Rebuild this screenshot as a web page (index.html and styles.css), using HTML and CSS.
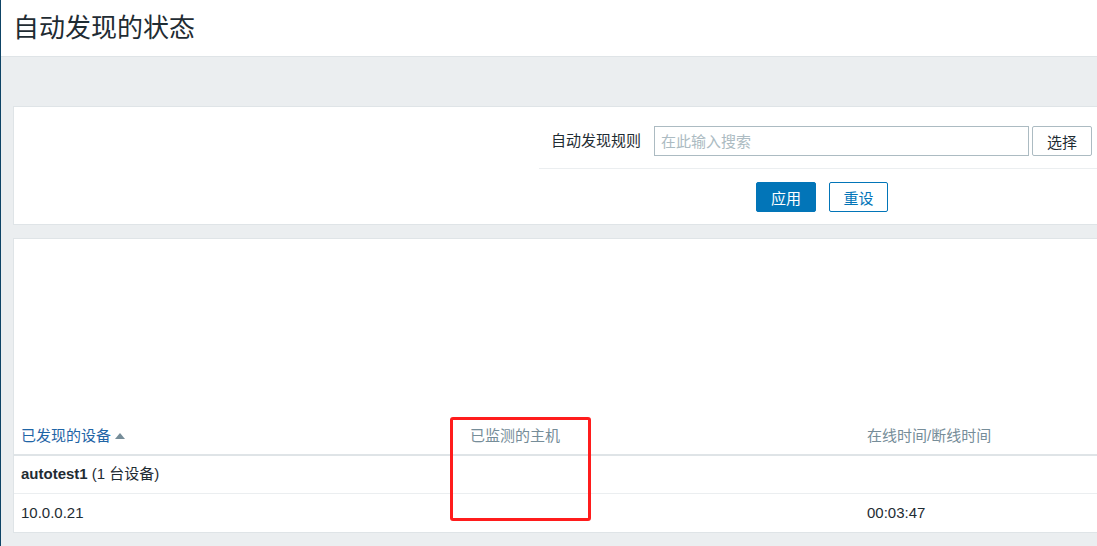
FILE: index.html
```html
<!DOCTYPE html>
<html lang="zh">
<head>
	<meta charset="UTF-8">
	<title>自动发现的状态</title>
	<link rel="stylesheet" href="styles.css">
</head>
<body>
	<div class="page">
		<div class="header">
			<h1>自动发现的状态</h1>
		</div>
		<div class="content">
			<div class="panel filter">
				<div class="filter-col">
					<div class="filter-row">
						<label class="filter-label">自动发现规则</label>
						<input type="text" class="search" placeholder="在此输入搜索">
						<button class="btn-alt">选择</button>
					</div>
					<div class="filter-buttons">
						<button class="btn-apply">应用</button>
						<button class="btn-reset">重设</button>
					</div>
				</div>
			</div>
			<div class="panel list">
				<div class="blank"></div>
				<table>
					<thead>
						<tr>
							<th class="c1"><a href="#" class="sort">已发现的设备</a><span class="arrow"></span></th>
							<th class="c2">已监测的主机</th>
							<th class="c3">在线时间/断线时间</th>
						</tr>
					</thead>
					<tbody>
						<tr>
							<td><b>autotest1</b> (1 台设备)</td>
							<td></td>
							<td></td>
						</tr>
						<tr>
							<td>10.0.0.21</td>
							<td></td>
							<td>00:03:47</td>
						</tr>
					</tbody>
				</table>
				<!-- 标注框 -->
				<div class="mark"></div>
			</div>
		</div>
	</div>
</body>
</html>
```

FILE: styles.css
```css
* {
	margin: 0;
	padding: 0;
	box-sizing: border-box;
}
html, body {
	height: 100%;
	overflow: hidden;
}
body {
	background-color: #ebeef0;
	font-family: "Liberation Sans", "Noto Sans CJK SC", sans-serif;
	font-size: 15px;
	color: #1f2c33;
}
.page {
	width: 1130px;
	min-height: 100%;
	border-left: 1px solid #0e4466;
}
.header {
	height: 57px;
	background-color: #fff;
	border-bottom: 1px solid #dfe4e7;
	padding-left: 12px;
	display: flex;
	align-items: center;
}
.header h1 {
	font-size: 26px;
	font-weight: normal;
	line-height: 30px;
	color: #1f2c33;
}
.content {
	padding: 49px 0 0 12px;
}
.panel {
	width: 1110px;
	background-color: #fff;
	border: 1px solid #dfe4e7;
}
.filter {
	padding-left: 525px;
	margin-bottom: 13px;
}
.filter-col {
	width: 566px;
}
.filter-row {
	display: flex;
	align-items: center;
	padding: 19px 0 12px 12px;
	border-bottom: 1px solid #ebeef0;
}
.filter-label {
	width: 90px;
	margin-right: 13px;
	line-height: 20px;
}
.search {
	width: 375px;
	height: 30px;
	border: 1px solid #acbbc2;
	padding: 0 6px;
	font-family: inherit;
	font-size: 15px;
	color: #1f2c33;
	outline: none;
}
.search::placeholder {
	color: #acbbc2;
}
button {
	font-family: inherit;
	font-size: 15px;
	height: 30px;
	border-radius: 2px;
	cursor: pointer;
}
.btn-alt {
	width: 60px;
	margin-left: 3px;
	background-color: #fff;
	border: 1px solid #acbbc2;
	color: #1f2c33;
}
.filter-buttons {
	display: flex;
	justify-content: center;
	gap: 13px;
	padding: 13px 0 12px;
}
.btn-apply {
	width: 60px;
	background-color: #0275b8;
	border: 1px solid #0275b8;
	color: #fff;
}
.btn-reset {
	width: 59px;
	background-color: #fff;
	border: 1px solid #0275b8;
	color: #0275b8;
}
.list {
	position: relative;
}
.blank {
	height: 178px;
}
table {
	width: 100%;
	border-collapse: collapse;
}
th {
	font-weight: normal;
	text-align: left;
	color: #768d99;
	height: 38px;
	padding: 0 7px;
	border-bottom: 2px solid #dfe4e7;
	line-height: 20px;
}
th.c1 {
	width: 449px;
}
th.c2 {
	width: 397px;
}
.sort {
	color: #1f65a6;
	text-decoration: none;
}
.arrow {
	display: inline-block;
	margin-left: 4px;
	border-left: 5px solid transparent;
	border-right: 5px solid transparent;
	border-bottom: 6px solid #768d99;
	vertical-align: 2px;
}
td {
	height: 38px;
	padding: 0 7px;
	border-bottom: 1px solid #ebeef0;
	line-height: 20px;
}
tbody tr:last-child td {
	height: 39px;
	padding-top: 1px;
	border-bottom: none;
}
td b {
	font-weight: bold;
}
.mark {
	position: absolute;
	left: 436px;
	top: 178px;
	width: 141px;
	height: 104px;
	border: 3px solid #ff1c1c;
	border-radius: 3px;
}
```
